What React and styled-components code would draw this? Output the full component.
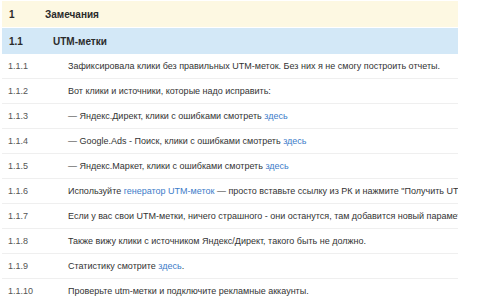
import styled, { createGlobalStyle } from "styled-components";

const GlobalStyle = createGlobalStyle`
  body {
    margin: 0;
    background: #ffffff;
    font-family: "Liberation Sans", Arial, sans-serif;
  }
`;

const rows = [
  { num: "1.1.1", parts: ["Зафиксировала клики без правильных UTM-меток. Без них я не смогу построить отчеты."] },
  { num: "1.1.2", parts: ["Вот клики и источники, которые надо исправить:"] },
  { num: "1.1.3", parts: ["— Яндекс.Директ, клики с ошибками смотреть ", { link: "здесь" }] },
  { num: "1.1.4", parts: ["— Google.Ads - Поиск, клики с ошибками смотреть ", { link: "здесь" }] },
  { num: "1.1.5", parts: ["— Яндекс.Маркет, клики с ошибками смотреть ", { link: "здесь" }] },
  {
    num: "1.1.6",
    parts: [
      "Используйте ",
      { link: "генератор UTM-меток" },
      " — просто вставьте ссылку из РК и нажмите \"Получить UTM-метки\"",
    ],
  },
  {
    num: "1.1.7",
    parts: ["Если у вас свои UTM-метки, ничего страшного - они останутся, там добавится новый параметр"],
  },
  { num: "1.1.8", parts: ["Также вижу клики с источником Яндекс/Директ, такого быть не должно."] },
  { num: "1.1.9", parts: ["Статистику смотрите ", { link: "здесь" }, "."] },
  { num: "1.1.10", parts: ["Проверьте utm-метки и подключите рекламные аккаунты."] },
];

const App = () => {
  return (
    <>
      <GlobalStyle />
      <Page>
        <Table>
          <Section>
            <HeadNum>1</HeadNum>
            <HeadTitle>Замечания</HeadTitle>
          </Section>
          <SubSection>
            <HeadNum>1.1</HeadNum>
            <SubTitle>UTM-метки</SubTitle>
          </SubSection>
          {rows.map((row, i) => (
            <Row key={row.num} $last={i === rows.length - 1}>
              <Num>{row.num}</Num>
              <Text>
                {row.parts.map((p, j) =>
                  typeof p === "string" ? p : <Link key={j}>{p.link}</Link>
                )}
              </Text>
            </Row>
          ))}
        </Table>
      </Page>
    </>
  );
};

export default App;

const Page = styled.div`
  padding: 1px 0 0 2px;
  width: 481px;
  height: 307px;
  box-sizing: border-box;
  overflow: hidden;
`;

const Table = styled.div`
  width: 456px;
  overflow: hidden;
  display: flex;
  flex-direction: column;
`;

const Section = styled.div`
  display: flex;
  align-items: center;
  height: 26px;
  background: #fdf8e2;
  border-bottom: 1px solid #ffffff;
`;

const SubSection = styled(Section)`
  height: 26px;
  background: #d3e8f7;
  border-bottom: none;
`;

const HeadNum = styled.div`
  width: 43px;
  padding-left: 7px;
  box-sizing: border-box;
  flex-shrink: 0;
  font-size: 10px;
  font-weight: 700;
  color: #2b2b2b;
`;

const HeadTitle = styled.div`
  font-size: 10px;
  font-weight: 700;
  color: #2b2b2b;
`;

const SubTitle = styled(HeadTitle)`
  margin-left: 8px;
`;

const Row = styled.div`
  display: flex;
  align-items: center;
  height: 25px;
  border-bottom: 1px solid ${(p) => (p.$last ? "transparent" : "#efefef")};
  box-sizing: border-box;
  white-space: nowrap;
`;

const Num = styled.div`
  width: 66px;
  padding-left: 6px;
  box-sizing: border-box;
  flex-shrink: 0;
  font-size: 9px;
  color: #555555;
`;

const Text = styled.div`
  font-size: 9px;
  color: #333333;
`;

const Link = styled.span`
  color: #3d7cc9;
`;
